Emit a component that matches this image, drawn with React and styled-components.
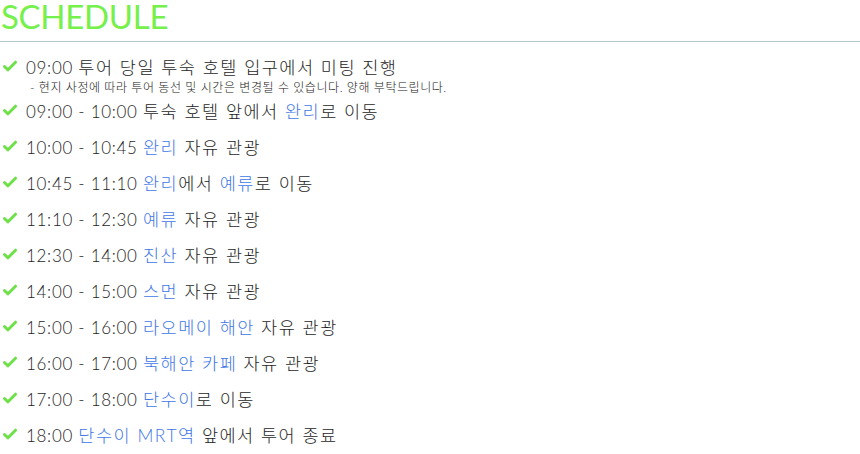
import React from 'react';
import styled, { createGlobalStyle } from 'styled-components';

const GlobalStyle = createGlobalStyle`
  body {
    margin: 0;
    background: #fff;
    font-family: "Lato", "Noto Sans CJK KR", sans-serif;
  }
`;

const schedule = [
  {
    time: '09:00',
    parts: [['투어 당일 투숙 호텔 입구에서 미팅 진행']],
    note: '- 현지 사정에 따라 투어 동선 및 시간은 변경될 수 있습니다. 양해 부탁드립니다.',
  },
  { time: '09:00 - 10:00', parts: [['투숙 호텔 앞에서 '], ['완리', true], ['로 이동']] },
  { time: '10:00 - 10:45', parts: [['완리', true], [' 자유 관광']] },
  { time: '10:45 - 11:10', parts: [['완리', true], ['에서 '], ['예류', true], ['로 이동']] },
  { time: '11:10 - 12:30', parts: [['예류', true], [' 자유 관광']] },
  { time: '12:30 - 14:00', parts: [['진산', true], [' 자유 관광']] },
  { time: '14:00 - 15:00', parts: [['스먼', true], [' 자유 관광']] },
  { time: '15:00 - 16:00', parts: [['라오메이 해안', true], [' 자유 관광']] },
  { time: '16:00 - 17:00', parts: [['북해안 카페', true], [' 자유 관광']] },
  { time: '17:00 - 18:00', parts: [['단수이', true], ['로 이동']] },
  { time: '18:00', parts: [['단수이 MRT역', true], [' 앞에서 투어 종료']] },
];

function Check() {
  return (
    <CheckIcon viewBox="0 0 14 12">
      <path d="M1.5 6.5 L5 9.8 L12.5 2.2" />
    </CheckIcon>
  );
}

export default function App() {
  return (
    <Page>
      <GlobalStyle />
      <Title>SCHEDULE</Title>
      <List>
        {schedule.map((item, i) => (
          <Item key={i}>
            <Line>
              <Check />
              <Text>
                <Time>{item.time} </Time>
                {item.parts.map(([t, hl], j) =>
                  hl ? <Place key={j}>{t}</Place> : <span key={j}>{t}</span>
                )}
              </Text>
            </Line>
            {item.note && <Note>{item.note}</Note>}
          </Item>
        ))}
      </List>
    </Page>
  );
}

const Page = styled.div`
  width: 860px;
  height: 454px;
  overflow: hidden;
`;

const Title = styled.h1`
  margin: 0;
  padding: 1px 0 0 1px;
  height: 42px;
  line-height: 30px;
  font-size: 33px;
  font-weight: 400;
  color: #76f04b;
  border-bottom: 1px solid #b6c6c9;
  letter-spacing: -0.3px;
  box-sizing: border-box;
`;

const List = styled.ul`
  list-style: none;
  margin: 6px 0 0;
  padding: 0;
`;

const Item = styled.li`
  display: flex;
  flex-direction: column;
`;

const Line = styled.div`
  display: flex;
  align-items: center;
  height: 36px;
  gap: 9px;
  padding-left: 3px;
`;

const CheckIcon = styled.svg`
  width: 14px;
  height: 12px;
  flex-shrink: 0;
  fill: none;
  stroke: #6fe04a;
  stroke-width: 3;
  stroke-linecap: round;
  stroke-linejoin: round;
`;

const Text = styled.span`
  font-size: 17.5px;
  font-weight: 300;
  color: #1e1e1e;
  white-space: pre;
  letter-spacing: 1.5px;
`;

const Time = styled.span`
  font-size: 17px;
  letter-spacing: 0.7px;
`;

const Place = styled.span`
  color: #3f77e6;
`;

const Note = styled.div`
  margin: -4px 0 -4px 30px;
  line-height: 16px;
  font-size: 12px;
  font-weight: 300;
  color: #222;
  letter-spacing: 0.55px;
`;
